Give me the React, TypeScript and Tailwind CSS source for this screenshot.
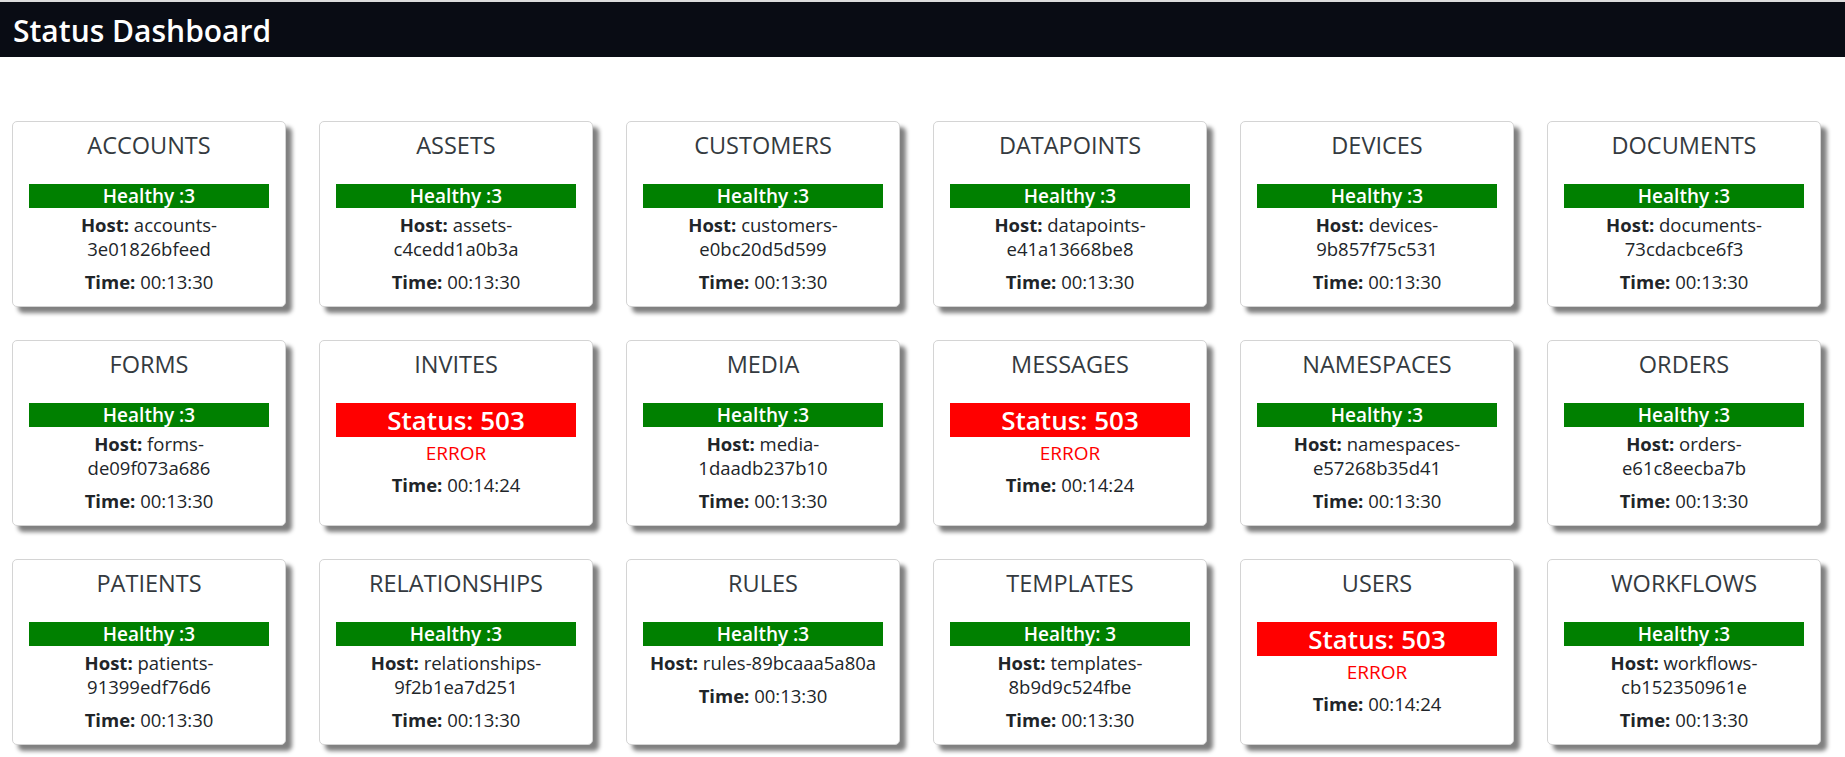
import React from "react";

type Svc = {
  name: string;
  ok: boolean;
  host?: string[];
  label?: string;
};

const rows: Svc[][] = [
  [
    { name: "ACCOUNTS", ok: true, host: ["accounts-", "3e01826bfeed"] },
    { name: "ASSETS", ok: true, host: ["assets-", "c4cedd1a0b3a"] },
    { name: "CUSTOMERS", ok: true, host: ["customers-", "e0bc20d5d599"] },
    { name: "DATAPOINTS", ok: true, host: ["datapoints-", "e41a13668be8"] },
    { name: "DEVICES", ok: true, host: ["devices-", "9b857f75c531"] },
    { name: "DOCUMENTS", ok: true, host: ["documents-", "73cdacbce6f3"] },
  ],
  [
    { name: "FORMS", ok: true, host: ["forms-", "de09f073a686"] },
    { name: "INVITES", ok: false },
    { name: "MEDIA", ok: true, host: ["media-", "1daadb237b10"] },
    { name: "MESSAGES", ok: false },
    { name: "NAMESPACES", ok: true, host: ["namespaces-", "e57268b35d41"] },
    { name: "ORDERS", ok: true, host: ["orders-", "e61c8eecba7b"] },
  ],
  [
    { name: "PATIENTS", ok: true, host: ["patients-", "91399edf76d6"] },
    { name: "RELATIONSHIPS", ok: true, host: ["relationships-", "9f2b1ea7d251"] },
    { name: "RULES", ok: true, host: ["rules-89bcaaa5a80a"] },
    { name: "TEMPLATES", ok: true, host: ["templates-", "8b9d9c524fbe"], label: "Healthy: 3" },
    { name: "USERS", ok: false },
    { name: "WORKFLOWS", ok: true, host: ["workflows-", "cb152350961e"] },
  ],
];

function Card({ s }: { s: Svc }) {
  return (
    <div className="flex flex-col items-stretch rounded-[5px] border border-[#d4d4d4] bg-white px-[16px] pt-[8px] shadow-[6px_6px_4px_#808080] h-[186px]">
      <div className="text-center text-[23.5px] leading-[30px] text-[#343a40]">{s.name}</div>
      {s.ok ? (
        <>
          <div className="mt-[24px] h-[24px] bg-[#008000] text-center text-[19px] font-semibold leading-[24px] text-white">
            {s.label ?? "Healthy :3"}
          </div>
          <div className="mt-[5px] text-center text-[18.5px] leading-[24px] text-[#212529]">
            {s.host!.map((line, i) => (
              <div key={i} className="whitespace-nowrap">
                {i === 0 && <span className="font-bold">Host: </span>}
                {line}
              </div>
            ))}
          </div>
          <div className="mt-[9px] text-center text-[18.5px] leading-[24px] text-[#212529]">
            <span className="font-bold">Time: </span>00:13:30
          </div>
        </>
      ) : (
        <>
          <div className="mt-[24px] h-[34px] bg-[#ff0000] text-center text-[26px] font-semibold leading-[34px] text-white">
            Status: 503
          </div>
          <div className="mt-[4px] text-center text-[19px] leading-[24px] text-[#ff0000]">ERROR</div>
          <div className="mt-[8px] text-center text-[18.5px] leading-[24px] text-[#212529]">
            <span className="font-bold">Time: </span>00:14:24
          </div>
        </>
      )}
    </div>
  );
}

export default function App() {
  return (
    <div className="min-h-[757px] bg-white" style={{ fontFamily: '"Open Sans", "Noto Sans", sans-serif' }}>
      <div className="h-[2px] bg-[#dcdcdc]" />
      <div className="flex h-[55px] items-center bg-[#090c14] pl-[13px] pt-[2px]">
        <h1 className="text-[30px] font-semibold leading-none text-white">Status Dashboard</h1>
      </div>
      <div className="grid grid-cols-[repeat(6,274px)] gap-x-[33px] gap-y-[33px] pl-[12px] pt-[64px]">
        {rows.flat().map((s) => (
          <Card key={s.name} s={s} />
        ))}
      </div>
    </div>
  );
}
